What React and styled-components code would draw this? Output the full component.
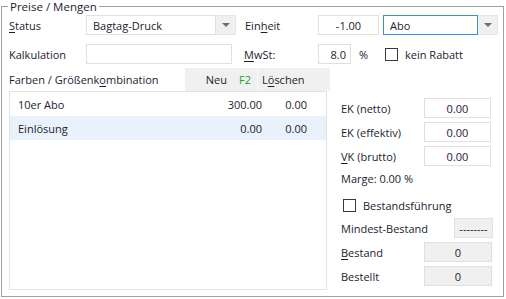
import React from 'react'
import styled, {createGlobalStyle} from 'styled-components'

const GlobalStyle = createGlobalStyle`
  html, body {
    margin: 0;
    padding: 0;
    background: #fff;
  }
  body {
    font-family: "Open Sans", "DejaVu Sans", sans-serif;
    font-size: 11px;
    color: #1c1c2e;
  }
  * { box-sizing: border-box; }
`

const Frame = styled.fieldset`
  margin: 0 0 0 1px;
  width: 503px;
  height: 297px;
  border: 1px solid #a0a0a0;
  padding: 0;
  min-width: 0;
`

const Legend = styled.legend`
  margin-left: 6px;
  padding: 0 2px;
  line-height: 13px;
  font-size: 11.5px;
`

const Inner = styled.div`
  padding: 2px 0 0 7px;
  display: flex;
  flex-direction: column;
`

const Row = styled.div`
  display: flex;
  align-items: center;
  height: 20px;
  margin-top: ${p => p.$mt || 0}px;
`

const Label = styled.span`
  width: ${p => p.$w}px;
  margin-left: ${p => p.$ml || 0}px;
  flex-shrink: 0;
  white-space: nowrap;
`

const U = styled.span`
  text-decoration: underline;
  text-underline-offset: 2px;
`

const Field = styled.div`
  width: ${p => p.$w}px;
  height: 20px;
  flex-shrink: 0;
  border: 1px solid ${p => p.$focus ? '#3d8ee8' : '#e0e0e0'};
  background: ${p => p.$ro ? '#f0f0f0' : '#fff'};
  display: flex;
  align-items: center;
  justify-content: ${p => p.$align || 'flex-start'};
  padding: 0 ${p => p.$pr ?? 6}px 0 6px;
  white-space: nowrap;
`

const Combo = styled.div`
  display: flex;
  width: ${p => p.$w}px;
  height: 20px;
  margin-left: ${p => p.$ml || 0}px;
  flex-shrink: 0;
`

const Arrow = styled.div`
  width: 20px;
  height: 20px;
  background: #f0f0f0;
  border: 1px solid #e6e6e6;
  border-left: none;
  display: flex;
  align-items: center;
  justify-content: center;
  &::after {
    content: '';
    border-left: 4px solid transparent;
    border-right: 4px solid transparent;
    border-top: 4px solid #6e6e6e;
  }
`

const Check = styled.span`
  width: 13px;
  height: 13px;
  border: 1px solid #3a3a3a;
  background: #fff;
  margin-left: ${p => p.$ml || 0}px;
  margin-right: 7px;
  flex-shrink: 0;
`

const Main = styled.div`
  display: flex;
  margin-top: 4px;
`

const LeftCol = styled.div`
  width: 318px;
  display: flex;
  flex-direction: column;
`

const ListHeader = styled.div`
  display: flex;
  align-items: center;
  height: 23px;
`

const HeadBar = styled.div`
  display: flex;
  height: 23px;
  margin-right: -3px;
  background: #f0f0f0;
`

const HeadCell = styled.div`
  width: ${p => p.$w}px;
  display: flex;
  align-items: center;
  justify-content: ${p => p.$right ? 'flex-end' : 'flex-start'};
  padding: ${p => p.$right ? '0 6px 0 0' : '0 0 0 4px'};
  gap: 12px;
  & + & {
    border-left: 1px solid #fafafa;
  }
`

const Key = styled.span`
  color: #1fa31f;
`

const List = styled.div`
  height: 199px;
  border: 1px solid #e2e2e2;
  background: #fff;
`

const ListRow = styled.div`
  display: grid;
  grid-template-columns: 1fr 80px 45px;
  align-items: center;
  height: 24px;
  padding: 0 19px 0 8px;
  background: ${p => p.$active ? '#e9f1fb' : 'transparent'};
  & > span:not(:first-child) {
    text-align: right;
  }
`

const RightCol = styled.div`
  margin-left: 14px;
  padding-top: 30px;
  display: flex;
  flex-direction: column;
`

const SideRow = styled.div`
  display: flex;
  align-items: center;
  height: ${p => p.$h || 20}px;
  margin-top: ${p => p.$mt ?? 4}px;
  &:first-child { margin-top: 0; }
`

export default function App() {
  return (
    <>
      <GlobalStyle />
      <Frame>
        <Legend>Preise / Mengen</Legend>
        <Inner>
          <Row>
            <Label $w={77}><U>S</U>tatus</Label>
            <Combo $w={150}>
              <Field $w={130}>Bagtag-Druck</Field>
              <Arrow />
            </Combo>
            <Label $w={73} $ml={9}>Ein<U>h</U>eit</Label>
            <Field $w={61} $align="center">-1.00</Field>
            <Combo $w={115} $ml={4}>
              <Field $w={95} $focus>Abo</Field>
              <Arrow />
            </Combo>
          </Row>
          <Row $mt={9}>
            <Label $w={77}>Kalkulation</Label>
            <Field $w={146} />
            <Label $w={74} $ml={12}><U>M</U>wSt:</Label>
            <Field $w={33} $align="flex-end" $pr={4}>8.0</Field>
            <Label $w={16} $ml={8}>%</Label>
            <Check $ml={10} />
            <span>kein Rabatt</span>
          </Row>
          <Main>
            <LeftCol>
              <ListHeader>
                <Label $w={176}>Farben / Größenk<U>o</U>mbination</Label>
                <HeadBar>
                  <HeadCell $w={72} $right>
                    <span>Neu</span>
                    <Key>F2</Key>
                  </HeadCell>
                  <HeadCell $w={73}>
                    <span>L<U>ö</U>schen</span>
                  </HeadCell>
                </HeadBar>
              </ListHeader>
              <List>
                <ListRow>
                  <span>10er Abo</span>
                  <span>300.00</span>
                  <span>0.00</span>
                </ListRow>
                <ListRow $active>
                  <span>Einlösung</span>
                  <span>0.00</span>
                  <span>0.00</span>
                </ListRow>
              </List>
            </LeftCol>
            <RightCol>
              <SideRow>
                <Label $w={83}>EK (netto)</Label>
                <Field $w={67} $align="center">0.00</Field>
              </SideRow>
              <SideRow>
                <Label $w={83}>EK (effektiv)</Label>
                <Field $w={67} $align="center">0.00</Field>
              </SideRow>
              <SideRow>
                <Label $w={83}><U>V</U>K (brutto)</Label>
                <Field $w={67} $align="center">0.00</Field>
              </SideRow>
              <SideRow $h={16} $mt={4}>
                <span>Marge: 0.00 %</span>
              </SideRow>
              <SideRow $mt={9}>
                <Check $ml={2} />
                <span>Bestandsführung</span>
              </SideRow>
              <SideRow $mt={3}>
                <Label $w={113}>Mindest-Bestand</Label>
                <Field $w={39} $ro $align="center">--------</Field>
              </SideRow>
              <SideRow>
                <Label $w={83}><U>B</U>estand</Label>
                <Field $w={68} $ro $align="center">0</Field>
              </SideRow>
              <SideRow>
                <Label $w={83}>Bestellt</Label>
                <Field $w={68} $ro $align="center">0</Field>
              </SideRow>
            </RightCol>
          </Main>
        </Inner>
      </Frame>
    </>
  )
}
